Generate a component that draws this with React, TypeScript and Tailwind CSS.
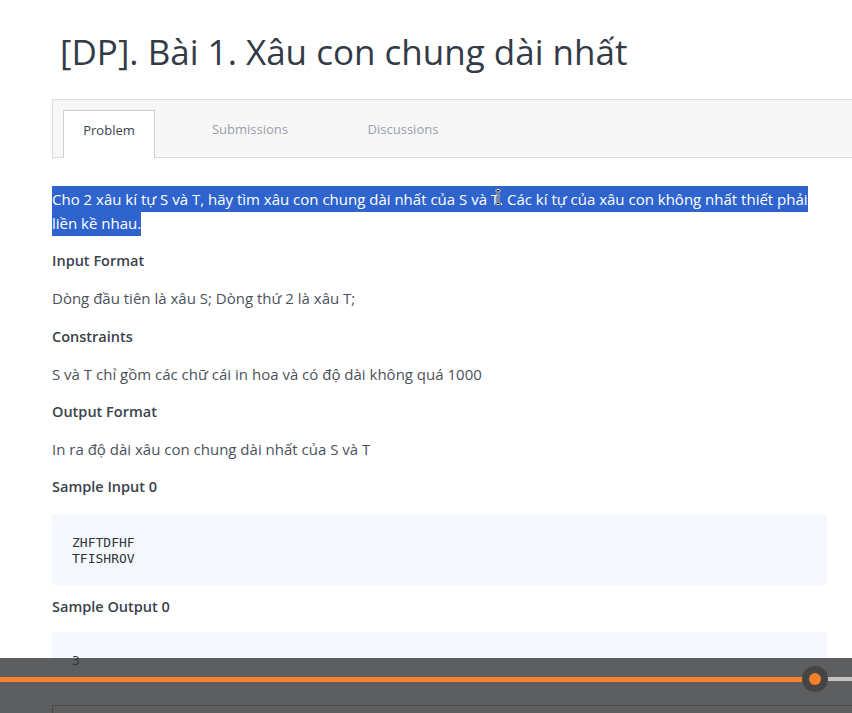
import React from 'react'

const font = { fontFamily: '"Open Sans", "Noto Sans", sans-serif' }

function Heading({ children }: { children: React.ReactNode }) {
  return <h3 className="text-[14.5px] font-semibold leading-6 text-[#3a424c]">{children}</h3>
}

function Body({ children }: { children: React.ReactNode }) {
  return <p className="text-[15px] leading-6 text-[#4b525c]">{children}</p>
}

function CodeBlock({ lines, top }: { lines: string[]; top?: boolean }) {
  return (
    <pre className="bg-[#f5f9fe] px-5 pb-[18px] pt-[21px] font-['DejaVu_Sans_Mono','Liberation_Mono',monospace] text-[13px] leading-4 text-[#30353c]">
      <span className={top ? 'relative z-20' : ''}>{lines.join('\n')}</span>
    </pre>
  )
}

export default function App() {
  return (
    <div className="relative h-[713px] w-[852px] overflow-hidden bg-white" style={font}>
      <div className="pl-[52px]">
        {/* title */}
        <h1 className="pl-2 pt-[30px] text-[35px] font-normal leading-[44px] text-[#333b47]">
          [DP]. Bài 1. Xâu con chung dài nhất
        </h1>

        {/* tabs */}
        <div className="mt-[25px] flex h-[59px] items-end border-y border-l border-[#dcdcdc] bg-[#f7f7f7] pl-[10px]">
          <div className="-mb-px flex h-[48px] w-[92px] items-center justify-center border-x border-t border-[#d0d0d0] bg-white pb-[8px] text-[13px] text-[#39424e]">
            Problem
          </div>
          <div className="flex h-[48px] w-[190px] items-center justify-center pb-[6px] text-[13px] text-[#979faf]">Submissions</div>
          <div className="flex h-[48px] w-[116px] items-center justify-center pb-[6px] text-[13px] text-[#979faf]">Discussions</div>
        </div>

        {/* problem statement, text selected */}
        <div className="relative mt-[30px] w-[775px] text-[15px] leading-[23.5px] text-white">
          <span className="bg-[#2f64cf] py-[3px] [box-decoration-break:clone]">
            Cho 2 xâu kí tự S và T, hãy tìm xâu con chung dài nhất của S và T. Các kí tự của xâu con không nhất thiết phải liền kề nhau.
          </span>
          <svg className="absolute left-[442px] top-[1px]" width="8" height="16" viewBox="0 0 8 16">
            <path d="M1 1h2l1 1 1-1h2M4 2v12M1 15h2l1-1 1 1h2" fill="none" stroke="#fff" strokeWidth="2.5" />
            <path d="M1 1h2l1 1 1-1h2M4 2v12M1 15h2l1-1 1 1h2" fill="none" stroke="#111" strokeWidth="1" />
          </svg>
        </div>

        <div className="mt-[14px] flex w-[775px] flex-col">
          <Heading>Input Format</Heading>
          <div className="mt-[13px]">
            <Body>Dòng đầu tiên là xâu S; Dòng thứ 2 là xâu T;</Body>
          </div>
          <div className="mt-[15px]">
            <Heading>Constraints</Heading>
          </div>
          <div className="mt-[13px]">
            <Body>S và T chỉ gồm các chữ cái in hoa và có độ dài không quá 1000</Body>
          </div>
          <div className="mt-[14px]">
            <Heading>Output Format</Heading>
          </div>
          <div className="mt-[13px]">
            <Body>In ra độ dài xâu con chung dài nhất của S và T</Body>
          </div>
          <div className="mt-[14px]">
            <Heading>Sample Input 0</Heading>
          </div>
          <div className="mt-[15px]">
            <CodeBlock lines={['ZHFTDFHF', 'TFISHROV']} />
          </div>
          <div className="mt-[10px]">
            <Heading>Sample Output 0</Heading>
          </div>
          <div className="mt-[13px]">
            <CodeBlock lines={['3']} top />
          </div>
        </div>
      </div>

      {/* video player bar over the page */}
      <div className="absolute inset-x-0 bottom-0 z-10 h-[55px] bg-[#5d5e5f]">
        <div className="absolute left-0 top-[19px] h-[5px] w-[805px] bg-[#f6812d]" />
        <div className="absolute left-[826px] right-0 top-[19px] h-[4px] bg-[#c2c2c2]" />
        <div className="absolute left-[802px] top-[8px] flex h-[26px] w-[26px] items-center justify-center rounded-full bg-[#454545]">
          <div className="h-[12px] w-[12px] rounded-full bg-[#f6812d]" />
        </div>
        <div className="absolute left-[52px] right-0 top-[47px] h-[10px] border-l border-t border-[#4a4a4a]" />
      </div>
    </div>
  )
}
